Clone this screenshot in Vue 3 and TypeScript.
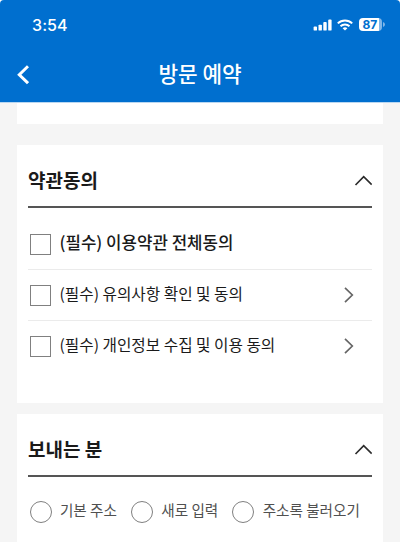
<script setup lang="ts">
import { ref } from 'vue'

interface Term {
  label: string
  strong: boolean
  link: boolean
}

const terms: Term[] = [
  { label: '(필수) 이용약관 전체동의', strong: true, link: false },
  { label: '(필수) 유의사항 확인 및 동의', strong: false, link: true },
  { label: '(필수) 개인정보 수집 및 이용 동의', strong: false, link: true },
]
const senderOptions: string[] = ['기본 주소', '새로 입력', '주소록 불러오기']
const agreed = ref<boolean[]>([false, false, false])
const sender = ref<string>('')
</script>

<template>
  <div class="screen">
    <header class="top">
      <div class="status">
        <span class="time">3:54</span>
        <div class="indicators">
          <svg class="signal" width="19" height="12" viewBox="0 0 19 12" fill="#fff">
            <rect x="0.6" y="7.6" width="3.4" height="4" rx="0.9" />
            <rect x="5.5" y="5.7" width="3.4" height="5.9" rx="0.9" />
            <rect x="10.3" y="3" width="3.4" height="8.6" rx="0.9" />
            <rect x="15.2" y="0.5" width="3.4" height="11.1" rx="0.9" />
          </svg>
          <svg class="wifi" width="16" height="12" viewBox="0 0 16 12" fill="none" stroke="#fff" stroke-width="2">
            <path d="M0.8 4.4C4.8 .5 11.2 .5 15.2 4.4" />
            <path d="M3.5 7.2C6 4.8 10 4.8 12.5 7.2" />
            <path d="M5.6 9.2C7 8 9 8 10.4 9.2L8 11.6Z" fill="#fff" stroke="none" />
          </svg>
          <div class="battery"><span class="level">87</span></div>
          <svg class="cap" width="2" height="5" viewBox="0 0 2 5"><path d="M0 0Q2 .8 2 2.5T0 5Z" fill="#80b6e8" /></svg>
        </div>
      </div>
      <div class="nav">
        <button class="back" aria-label="뒤로">
          <svg width="13" height="20" viewBox="0 0 13 20" fill="none" stroke="#fff" stroke-width="3">
            <path d="M12 1.2L3.3 9.7L12 18.2" />
          </svg>
        </button>
        <h1 class="title">방문 예약</h1>
      </div>
    </header>

    <main class="content">
      <section class="card stub"></section>

      <section class="card terms">
        <div class="heading">
          <h2>약관동의</h2>
          <svg width="18" height="11" viewBox="0 0 18 11" fill="none" stroke="#2c2c2c" stroke-width="1.7">
            <path d="M1.5 10L9.7 1.7L17.7 9.6" />
          </svg>
        </div>
        <ul class="list">
          <li v-for="(term, i) in terms" :key="term.label" class="row">
            <label class="choice">
              <input v-model="agreed[i]" type="checkbox" class="box" />
              <span class="label" :class="{ strong: term.strong }">{{ term.label }}</span>
            </label>
            <svg v-if="term.link" class="more" width="10" height="16" viewBox="0 0 10 16" fill="none" stroke="#666" stroke-width="1.7">
              <path d="M1 .9L8.3 8L1 15.1" />
            </svg>
          </li>
        </ul>
      </section>

      <section class="card sender">
        <div class="heading">
          <h2>보내는 분</h2>
          <svg width="18" height="11" viewBox="0 0 18 11" fill="none" stroke="#2c2c2c" stroke-width="1.7">
            <path d="M1.5 10L9.7 1.7L17.7 9.6" />
          </svg>
        </div>
        <div class="radios">
          <label v-for="option in senderOptions" :key="option" class="radio">
            <input v-model="sender" type="radio" name="sender" :value="option" class="circle" />
            <span class="option">{{ option }}</span>
          </label>
        </div>
      </section>
    </main>
  </div>
</template>

<style>
body {
  background: #fff;
}
</style>

<style scoped>
.screen {
  width: 400px;
  height: 542px;
  overflow: hidden;
  display: flex;
  flex-direction: column;
  background: #f5f5f5;
  border-radius: 4px 4px 0 0;
  font-family: "Noto Sans CJK KR", sans-serif;
  color: #1a1a1a;
}
.top {
  flex: none;
  height: 102px;
  background: #006fcf;
  border-bottom: 1px solid #b9d7f1;
  color: #fff;
}
.status {
  height: 49px;
  box-sizing: border-box;
  padding: 0 15px 0 32px;
  display: flex;
  justify-content: space-between;
  align-items: center;
}
.time {
  font: 500 16px/20px Inter, sans-serif;
  letter-spacing: 0.1px;
}
.indicators {
  display: flex;
  align-items: center;
}
.wifi {
  margin: 0 6px 0 5px;
}
.battery {
  width: 23px;
  height: 13px;
  border-radius: 4px;
  background: linear-gradient(90deg, #fff 20px, #80b6e8 20px);
  color: #006fcf;
  display: flex;
  padding-left: 3.5px;
  box-sizing: border-box;
}
.level {
  font: 700 12px/13px Inter, sans-serif;
}
.cap {
  margin-left: 1px;
}
.nav {
  height: 53px;
  display: grid;
  grid-template-columns: 40px 1fr 40px;
  align-items: center;
}
.back {
  border: 0;
  padding: 0 0 2px 16px;
  background: none;
  display: flex;
}
.title {
  margin: 0;
  padding-bottom: 6px;
  text-align: center;
  font-size: 21.3px;
  line-height: 28px;
  font-weight: 500;
}
.content {
  flex: 1;
  padding: 0 17px;
  display: flex;
  flex-direction: column;
}
.card {
  flex: none;
  box-sizing: border-box;
  background: #fff;
  padding: 0 11px;
}
.stub {
  height: 21px;
  margin-bottom: 21px;
}
.terms {
  height: 258px;
  margin-bottom: 11px;
}
.sender {
  height: 128px;
}
.heading {
  height: 63px;
  box-sizing: border-box;
  padding-top: 10px;
  border-bottom: 2px solid #555;
  display: flex;
  align-items: center;
  justify-content: space-between;
}
h2 {
  margin: 0;
  padding-bottom: 2px;
  font-size: 19px;
  line-height: 26px;
  font-weight: 700;
}
.list {
  list-style: none;
  margin: 0;
  padding: 10px 0 0;
}
.row {
  height: 51px;
  box-sizing: border-box;
  display: flex;
  align-items: center;
  justify-content: space-between;
  padding: 0 18px 0 2px;
  border-bottom: 1px solid #ebebeb;
}
.row:first-child {
  height: 52px;
  padding-top: 1px;
}
.row:last-child {
  border-bottom-color: transparent;
}
.choice {
  display: flex;
  align-items: center;
  gap: 8.5px;
}
.box,
.circle {
  appearance: none;
  margin: 0;
  width: 21px;
  height: 21px;
  border: 1px solid #808080;
  background: #fff;
}
.circle {
  width: 22px;
  height: 22px;
  border-radius: 50%;
}
.label {
  font-size: 15.7px;
  line-height: 22px;
  padding-bottom: 3px;
}
.label.strong {
  font-size: 16.8px;
  font-weight: 500;
  padding-bottom: 5px;
}
.radios {
  display: flex;
  padding: 23px 0 0 1.5px;
  gap: 14px;
}
.radio {
  display: flex;
  align-items: center;
  gap: 8.4px;
}
.option {
  font-size: 14.6px;
  line-height: 20px;
  color: #505050;
  padding-bottom: 3px;
}
</style>
